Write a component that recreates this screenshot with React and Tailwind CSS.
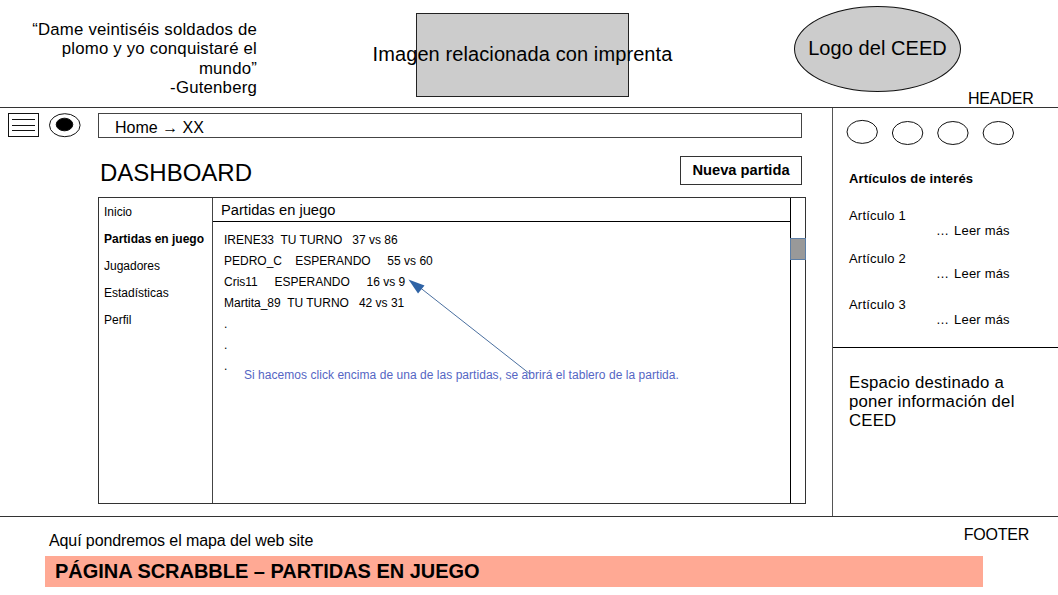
const menu = ["Inicio", "Partidas en juego", "Jugadores", "Estadísticas", "Perfil"];

const games = [
  "IRENE33  TU TURNO   37 vs 86",
  "PEDRO_C    ESPERANDO     55 vs 60",
  "Cris11     ESPERANDO     16 vs 9",
  "Martita_89  TU TURNO   42 vs 31",
  ".",
  ".",
  ".",
];

function Article({ n, className }) {
  return (
    <div className={`text-[13px] leading-[15px] tracking-[0.2px] ${className}`}>
      <div>Artículo {n}</div>
      <div className="pl-[87px]">… <span className="pl-px">Leer más</span></div>
    </div>
  );
}

function Header() {
  return (
    <header className="flex h-[107px] shrink-0">
      <p className="w-[257px] pt-5 text-right text-[16.8px] leading-[19.3px] tracking-[0.2px]">
        “Dame veintiséis soldados de
        <br />
        plomo y yo conquistaré el
        <br />
        mundo”
        <br />
        -Gutenberg
      </p>
      <div className="ml-[159px] mt-[13px] flex h-[84px] w-[213px] items-center justify-center border border-[#222] bg-[#ccc]">
        <span className="shrink-0 whitespace-nowrap pb-[2px] text-[20px] leading-6 tracking-[0.1px]">
          Imagen relacionada con imprenta
        </span>
      </div>
      <div className="ml-[165px] mt-[6px] flex h-[86px] w-[167px] items-center justify-center rounded-[50%] border border-[#111] bg-[#ccc]">
        <span className="whitespace-nowrap pb-[2px] text-[20px] leading-6 tracking-[0.06px]">Logo del CEED</span>
      </div>
      <span className="ml-[7px] mt-[90px] text-[16px] leading-[18px] tracking-[-0.2px]">HEADER</span>
    </header>
  );
}

function Toolbar() {
  return (
    <div className="flex pl-[7px] pt-[5px]">
      <svg className="h-[25px] w-[75px]" viewBox="0 0 75 25" fill="none" stroke="#111">
        <rect x="1.5" y="0.5" width="30" height="23" />
        <path d="M5 6.5H28M5 12.5H28M5 17.5H28" />
        <ellipse cx="57.8" cy="12.2" rx="15.3" ry="11.5" />
        <ellipse cx="57.5" cy="11.5" rx="8.3" ry="6.3" fill="#000" />
      </svg>
      <div className="ml-[16px] h-[25px] w-[704px] border border-[#444] pl-[16px] pt-[5px] text-[16px] leading-[18px]">
        Home → XX
      </div>
    </div>
  );
}

function Board() {
  return (
    <div className="relative ml-[98px] mt-[12px] flex h-[307px] w-[708px] border border-[#333]">
      <nav className="flex w-[114px] flex-col gap-[13px] border-r border-[#444] pl-[5px] pt-[7px] text-[12px] leading-[14px]">
        {menu.map((m) => (
          <span key={m} className={m === "Partidas en juego" ? "whitespace-nowrap font-bold" : ""}>
            {m}
          </span>
        ))}
      </nav>
      <div className="flex w-[577px] flex-col">
        <h2 className="h-[24px] border-b border-black pl-[8px] pt-[4px] text-[14.7px] leading-[17px]">Partidas en juego</h2>
        <div className="whitespace-pre pl-[11px] pt-[8px] text-[12px] leading-[21px]">
          {games.map((g, i) => (
            <div key={i}>{g}</div>
          ))}
        </div>
      </div>
      <div className="w-[15px] border-l border-black">
        <div className="-ml-px mt-[40px] -mr-px h-[22px] border border-[#5c7ea6] bg-[#999]" />
      </div>
      <p className="absolute left-[145px] top-[170px] whitespace-nowrap text-[12px] leading-[14px] tracking-[0.04px] text-[#5566c4]">
        Si hacemos click encima de una de las partidas, se abrirá el tablero de la partida.
      </p>
      <svg className="absolute left-[301px] top-[72px] h-[110px] w-[140px]" viewBox="400 270 140 110">
        <path d="M418 286L530 374" stroke="#4a6f9f" fill="none" />
        <path d="M408.5 279.5L424.5 285.5L418 293.5Z" fill="#2f63a5" />
      </svg>
    </div>
  );
}

function Aside() {
  return (
    <aside className="flex w-[226px] flex-col border-l border-[#555]">
      <div className="h-[240px] border-b border-black pl-[14px]">
        <svg className="mt-[11px] h-[26px] w-[170px] overflow-visible" viewBox="0 0 170 26" fill="none" stroke="#111">
          <ellipse cx="15.2" cy="12.9" rx="15.2" ry="11.5" />
          <ellipse cx="60.6" cy="14" rx="15.2" ry="11.5" />
          <ellipse cx="105.9" cy="14" rx="15.2" ry="11.5" />
          <ellipse cx="151.3" cy="14" rx="15.2" ry="11.5" />
        </svg>
        <div className="pl-[2px]">
          <h3 className="mt-[26px] text-[13px] font-bold leading-[15px] tracking-[0.14px]">Artículos de interés</h3>
          <Article n={1} className="mt-[22px]" />
          <Article n={2} className="mt-[13px]" />
          <Article n={3} className="mt-[16px]" />
        </div>
      </div>
      <p className="w-[200px] pl-[16px] pt-[25px] text-[16.8px] leading-[19px] tracking-[0.2px]">
        Espacio destinado a poner información del CEED
      </p>
    </aside>
  );
}

export default function App() {
  return (
    <div className="flex h-[595px] w-[1058px] flex-col overflow-hidden bg-white font-['Liberation_Sans',Arial,sans-serif] text-black">
      <Header />
      <div className="flex h-[410px] shrink-0 border-y border-[#333]">
        <main className="w-[832px]">
          <Toolbar />
          <div className="mt-[18px] flex h-[29px] items-start pl-[100px]">
            <h1 className="w-[580px] pt-[3px] text-[24px] leading-[28px]">DASHBOARD</h1>
            <button className="h-[29px] w-[122px] border border-[#333] text-[14.7px] font-bold leading-[17px]">
              Nueva partida
            </button>
          </div>
          <Board />
        </main>
        <Aside />
      </div>
      <footer>
        <div className="flex justify-between pl-[49px] pr-[29px]">
          <span className="mt-[15px] text-[16px] leading-[18px] tracking-[-0.1px]">Aquí pondremos el mapa del web site</span>
          <span className="mt-[9px] text-[16px] leading-[18px] tracking-[-0.25px]">FOOTER</span>
        </div>
        <div className="ml-[45px] mt-[6px] h-[31px] w-[938px] bg-[#ffa994] pl-[10px] pt-[4px] text-[20px] font-bold leading-[23px] tracking-[-0.03px]">
          PÁGINA SCRABBLE – PARTIDAS EN JUEGO
        </div>
      </footer>
    </div>
  );
}
